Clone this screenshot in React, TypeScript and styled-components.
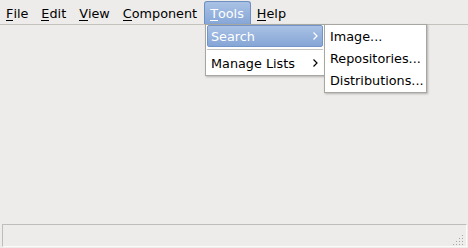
import React, { FC } from 'react';
import styled, { createGlobalStyle } from 'styled-components';

const GlobalStyle = createGlobalStyle`
  html, body {
    margin: 0;
    padding: 0;
    background: #edeceb;
  }
  body {
    font-family: 'DejaVu Sans', 'Liberation Sans', sans-serif;
    font-size: 12.8px;
    color: #000;
  }
`;

const StyledWindow = styled.div`
  background: #edeceb;
  display: flex;
  flex-direction: column;
  height: 248px;
  overflow: hidden;
  position: relative;
  width: 468px;
`;
const StyledMenuBar = styled.div`
  border-bottom: 1px solid #c4c2bd;
  box-sizing: border-box;
  display: flex;
  height: 25px;
  padding-top: 1px;
`;
const StyledMenuItem = styled.div<{ $active?: boolean }>`
  align-items: center;
  background: ${({ $active }) =>
    $active ? 'linear-gradient(#a9c1e4, #87a7d7)' : 'transparent'};
  border: 1px solid ${({ $active }) => ($active ? '#6e8fc2' : 'transparent')};
  border-bottom: none;
  border-radius: 3px 3px 0 0;
  box-sizing: border-box;
  color: ${({ $active }) => ($active ? '#fff' : '#000')};
  display: flex;
  height: 23px;
  line-height: 23px;
  padding: 0 6px 0 5px;
  & u {
    border-bottom: 1px solid currentColor;
    display: inline-block;
    line-height: 12px;
    text-decoration: none;
  }
`;
const StyledContent = styled.div`
  flex: 1;
`;
const StyledStatusBar = styled.div`
  border-top: 1px solid #bfbdb9;
  border-left: 1px solid #bfbdb9;
  border-bottom: 1px solid #fbfbfa;
  border-right: 1px solid #fbfbfa;
  height: 21px;
  margin: 0 1px 1px 2px;
  position: relative;
`;
const StyledGrip = styled.svg`
  bottom: 1px;
  position: absolute;
  right: 3px;
`;
const StyledPopup = styled.div<{ $left: number; $top: number; $width: number }>`
  background: #fff;
  border: 1px solid #a8a6a1;
  box-shadow: 1px 1px 2px rgba(0, 0, 0, 0.25);
  box-sizing: border-box;
  left: ${({ $left }) => $left}px;
  padding: 0 0 1px;
  position: absolute;
  top: ${({ $top }) => $top}px;
  width: ${({ $width }) => $width}px;
  z-index: 2;
`;
const StyledPopupItem = styled.div<{ $selected?: boolean }>`
  align-items: center;
  background: ${({ $selected }) =>
    $selected ? 'linear-gradient(#a9c1e4, #86a6d6)' : 'transparent'};
  border: 1px solid ${({ $selected }) => ($selected ? '#7495c8' : 'transparent')};
  border-radius: 2px;
  box-sizing: border-box;
  color: ${({ $selected }) => ($selected ? '#fff' : '#000')};
  display: flex;
  height: 22px;
  justify-content: space-between;
  margin: 0 1px;
  padding: 0 3px;
`;
const StyledSeparator = styled.div`
  border-top: 1px solid #c6c4bf;
  border-bottom: 1px solid #fff;
  margin: 2px 1px 1px;
`;
const StyledArrow = styled.svg`
  margin-right: 1px;
`;

const Arrow: FC<{ color: string }> = ({ color }) => (
  <StyledArrow width="5" height="8" viewBox="0 0 5 8">
    <path d="M0.5 0.5 L4 4 L0.5 7.5" fill="none" stroke={color} strokeWidth="1.2" />
  </StyledArrow>
);

const Grip: FC = () => (
  <StyledGrip width="10" height="10" viewBox="0 0 10 10">
    {[
      [9, 0], [9, 3], [6, 3], [9, 6], [6, 6], [3, 6], [9, 9], [6, 9], [3, 9], [0, 9],
    ].map(([x, y]) => (
      <rect key={`${x}-${y}`} x={x} y={y} width="1" height="1" fill="#a9a7a3" />
    ))}
  </StyledGrip>
);

const menus: { label: string; key: string; rest: string }[] = [
  { label: 'File', key: 'F', rest: 'ile' },
  { label: 'Edit', key: 'E', rest: 'dit' },
  { label: 'View', key: 'V', rest: 'iew' },
  { label: 'Component', key: 'C', rest: 'omponent' },
  { label: 'Tools', key: 'T', rest: 'ools' },
  { label: 'Help', key: 'H', rest: 'elp' },
];

const App: FC = () => (
  <StyledWindow>
    <GlobalStyle />
    <StyledMenuBar>
      {menus.map((m) => (
        <StyledMenuItem key={m.label} $active={m.label === 'Tools'}>
          <span>
            <u>{m.key}</u>
            {m.rest}
          </span>
        </StyledMenuItem>
      ))}
    </StyledMenuBar>
    <StyledContent />
    <StyledStatusBar>
      <Grip />
    </StyledStatusBar>
    <StyledPopup $left={205} $top={24} $width={120}>
      <StyledPopupItem $selected>
        Search
        <Arrow color="#fff" />
      </StyledPopupItem>
      <StyledSeparator />
      <StyledPopupItem>
        Manage Lists
        <Arrow color="#000" />
      </StyledPopupItem>
    </StyledPopup>
    <StyledPopup $left={324} $top={24} $width={103}>
      <StyledPopupItem>Image...</StyledPopupItem>
      <StyledPopupItem>Repositories...</StyledPopupItem>
      <StyledPopupItem>Distributions...</StyledPopupItem>
    </StyledPopup>
  </StyledWindow>
);

export default App;
